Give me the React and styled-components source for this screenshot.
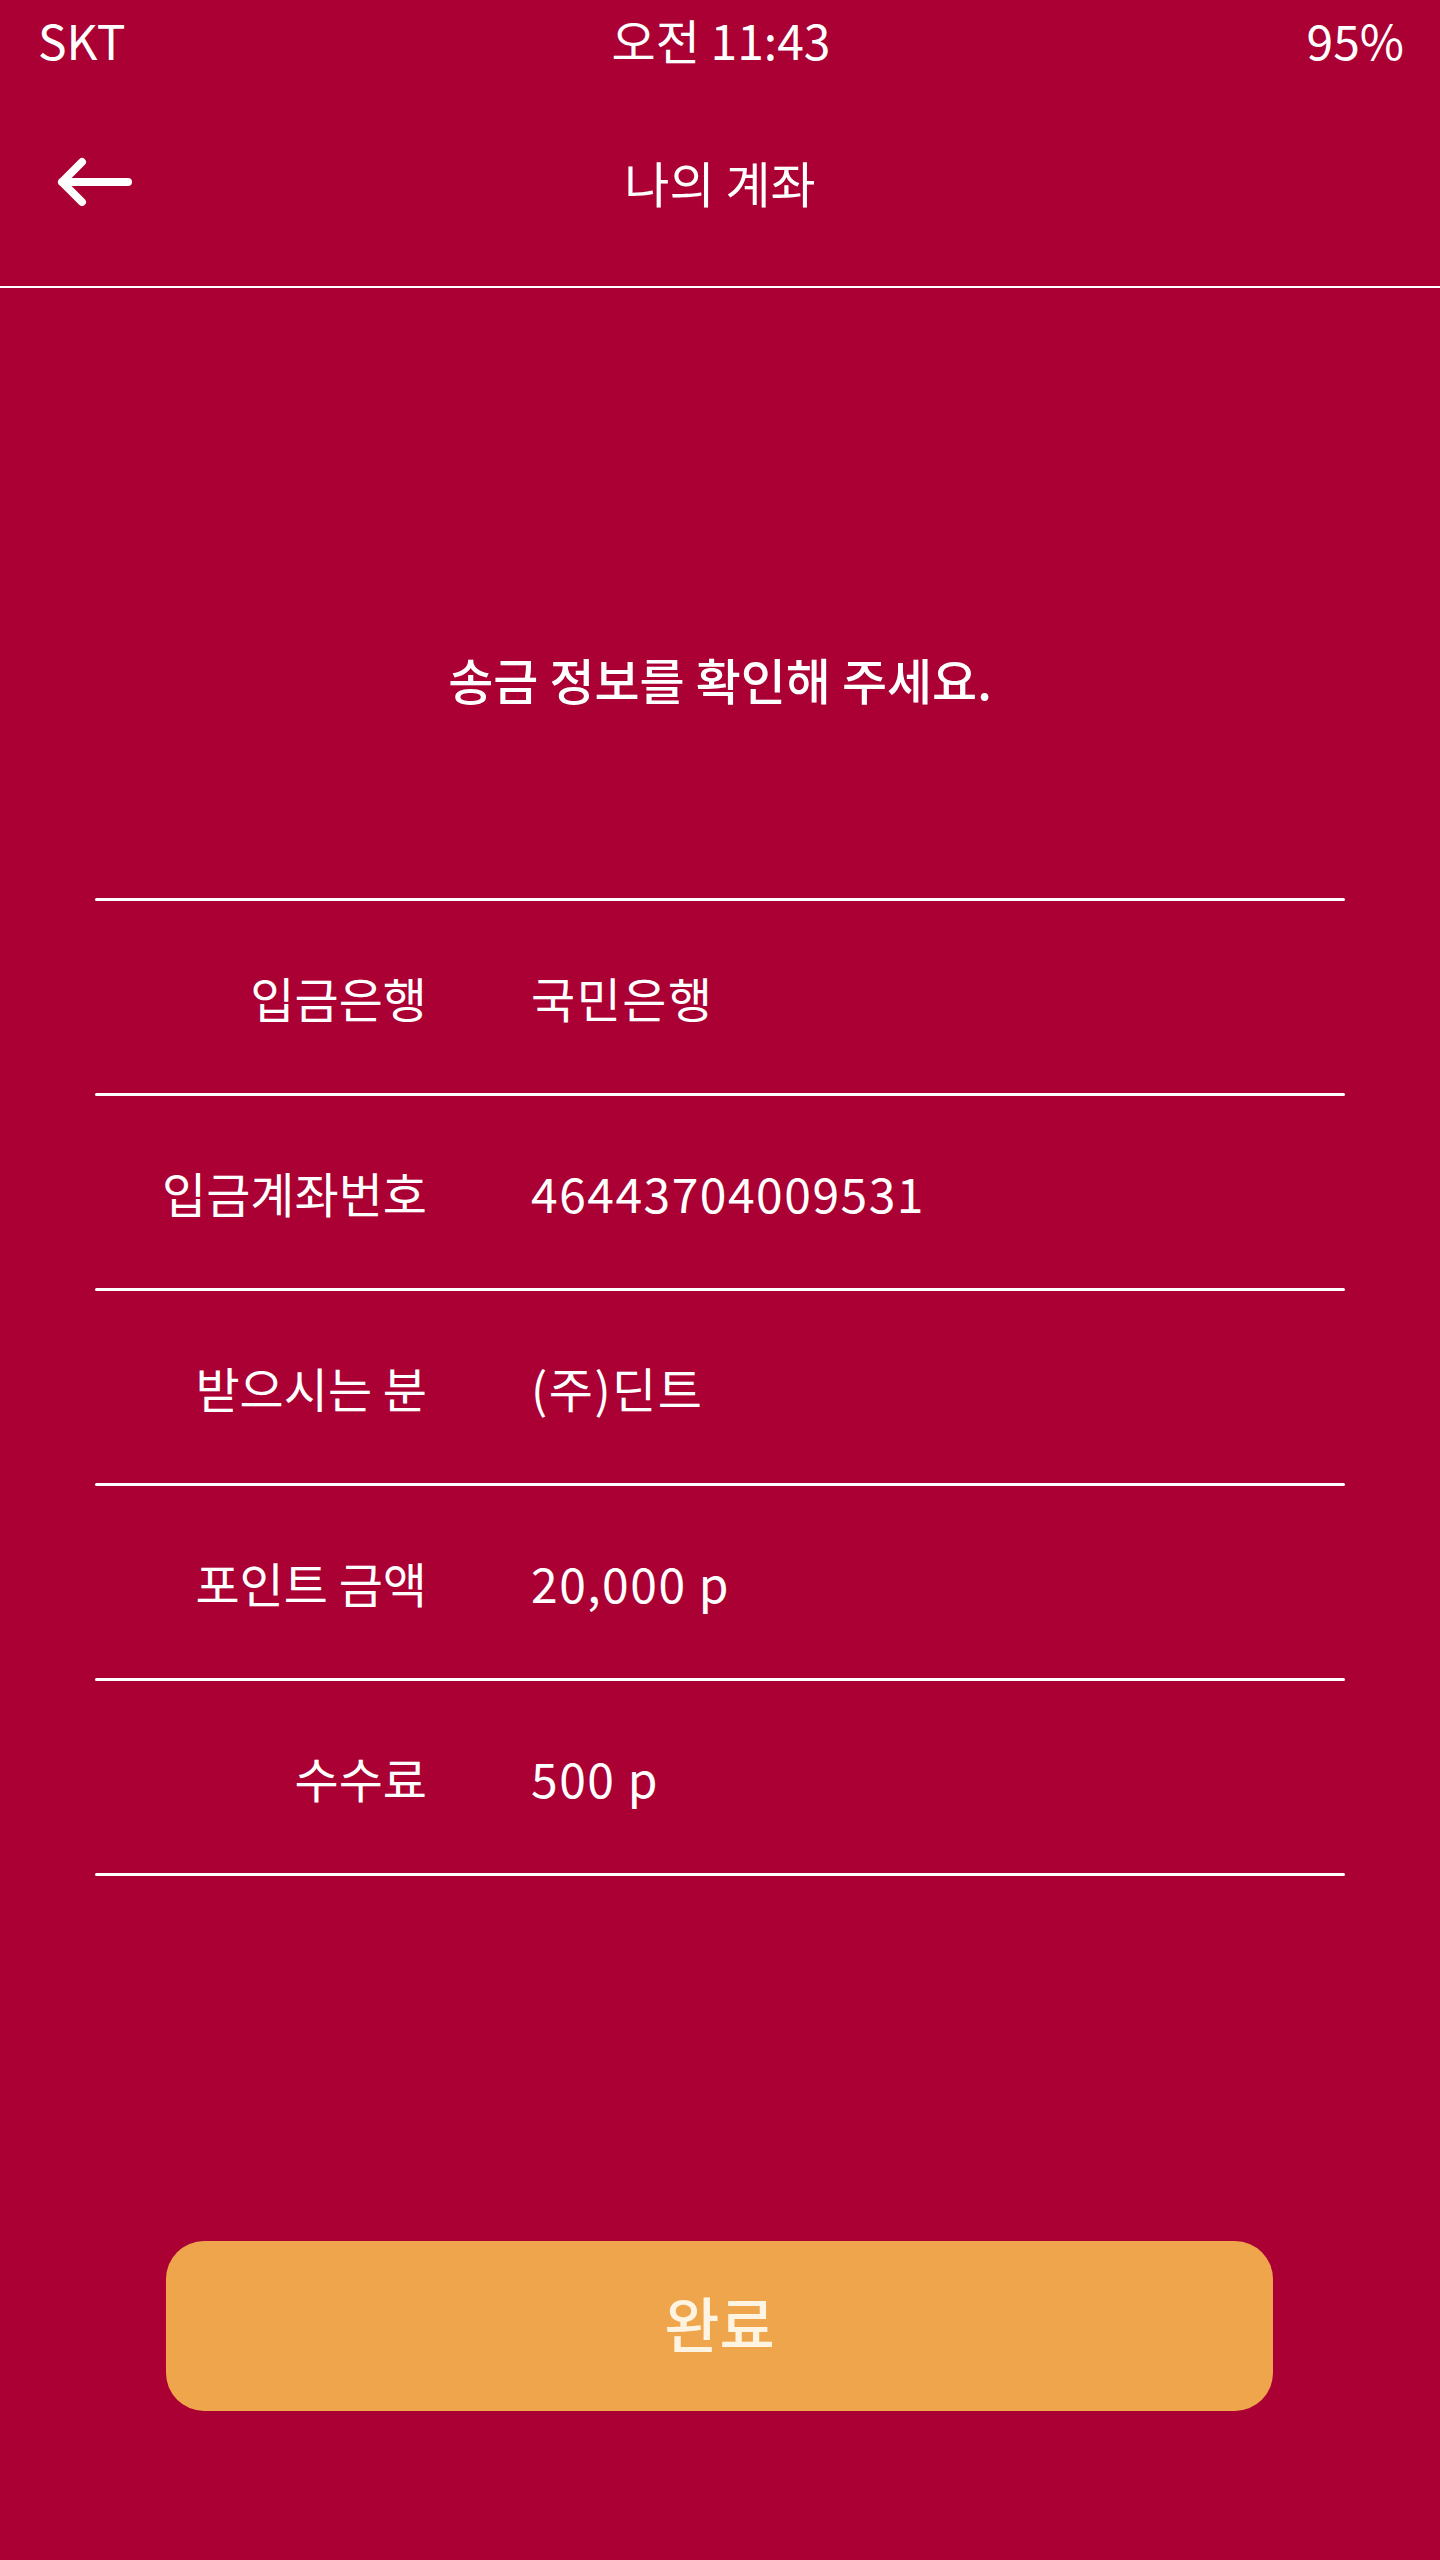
import React from "react";
import styled, { createGlobalStyle } from "styled-components";

const GlobalStyle = createGlobalStyle`
  html, body {
    margin: 0;
    padding: 0;
    background: #aa0033;
  }
  * { box-sizing: border-box; }
  body {
    font-family: "Noto Sans CJK KR", "Noto Sans", sans-serif;
    color: #ffffff;
  }
`;

const Page = styled.div`
  width: 1440px;
  min-height: 2560px;
  background: #aa0033;
  display: flex;
  flex-direction: column;
`;

const StatusBar = styled.div`
  height: 78px;
  padding: 0 36px 0 38px;
  display: grid;
  grid-template-columns: 1fr auto 1fr;
  align-items: center;
  font-size: 48px;
  line-height: 1;
  font-weight: 400;
`;

const StatusItem = styled.span`
  justify-self: ${(p) => p.$align || "start"};
`;

const Header = styled.header`
  height: 210px;
  border-bottom: 2px solid #ffffff;
  display: grid;
  grid-template-columns: 1fr auto 1fr;
  align-items: center;
`;

const BackButton = styled.button`
  justify-self: start;
  margin-left: 56px;
  padding: 0;
  border: 0;
  background: transparent;
  display: flex;
  cursor: pointer;
`;

const HeaderTitle = styled.h1`
  margin: 0;
  font-size: 49px;
  font-weight: 400;
  line-height: 1.2;
`;

const Prompt = styled.h2`
  margin: 362px 0 0;
  text-align: center;
  font-size: 49px;
  font-weight: 500;
  line-height: 58px;
`;

const Table = styled.div`
  margin: 190px 95px 0;
  display: flex;
  flex-direction: column;
`;

const Divider = styled.div`
  height: 3px;
  border-radius: 2px;
  background: #ffffff;
`;

const Row = styled.div`
  height: 192px;
  display: grid;
  grid-template-columns: 332px 1fr;
  column-gap: 104px;
  align-items: center;
`;

const Label = styled.span`
  text-align: right;
  font-size: 48px;
  font-weight: 400;
  white-space: nowrap;
`;

const Value = styled.span`
  font-size: 48px;
  font-weight: 400;
  letter-spacing: 1.5px;
  white-space: nowrap;
`;

const Spacer = styled.div`
  flex: 1;
`;

const Footer = styled.div`
  padding: 0 167px 149px 166px;
`;

const DoneButton = styled.button`
  width: 100%;
  height: 170px;
  padding: 0 0 10px;
  border: 0;
  border-radius: 38px;
  background: #efa54b;
  color: #fff4e2;
  font-family: "Noto Sans CJK KR", "Noto Sans", sans-serif;
  font-size: 60px;
  font-weight: 500;
  cursor: pointer;
`;

const rows = [
  { label: "입금은행", value: "국민은행" },
  { label: "입금계좌번호", value: "46443704009531" },
  { label: "받으시는 분", value: "(주)딘트" },
  { label: "포인트 금액", value: "20,000 p" },
  { label: "수수료", value: "500 p" },
];

function BackArrow() {
  return (
    <svg width="80" height="52" viewBox="0 0 80 52" fill="none">
      <path
        d="M6 26 H72 M26 6 L6 26 L26 46"
        stroke="#ffffff"
        strokeWidth="8"
        strokeLinecap="round"
        strokeLinejoin="round"
      />
    </svg>
  );
}

export default function App() {
  return (
    <>
      <GlobalStyle />
      <Page>
        <StatusBar>
          <StatusItem>SKT</StatusItem>
          <StatusItem $align="center">오전 11:43</StatusItem>
          <StatusItem $align="end">95%</StatusItem>
        </StatusBar>
        <Header>
          <BackButton aria-label="뒤로">
            <BackArrow />
          </BackButton>
          <HeaderTitle>나의 계좌</HeaderTitle>
          <span />
        </Header>
        <Prompt>송금 정보를 확인해 주세요.</Prompt>
        <Table>
          <Divider />
          {rows.map((r) => (
            <React.Fragment key={r.label}>
              <Row>
                <Label>{r.label}</Label>
                <Value>{r.value}</Value>
              </Row>
              <Divider />
            </React.Fragment>
          ))}
        </Table>
        <Spacer />
        <Footer>
          <DoneButton>완료</DoneButton>
        </Footer>
      </Page>
    </>
  );
}
